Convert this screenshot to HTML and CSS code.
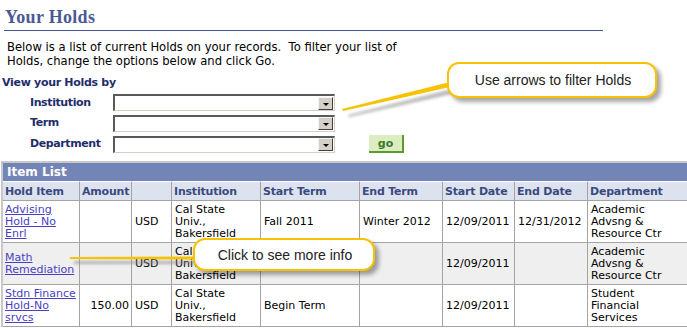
FILE: index.html
```html
<!DOCTYPE html>
<html lang="en">
<head>
    <meta charset="UTF-8">
    <title>Your Holds</title>
    <link rel="stylesheet" href="styles.css">
</head>
<body>
<div class="page">
    <h1 class="page-title">Your Holds</h1>

    <p class="intro">Below is a list of current Holds on your records.&nbsp; To filter your list of<br>
        Holds, change the options below and click Go.</p>

    <h2 class="filter-title">View your Holds by</h2>

    <div class="filters">
        <label class="filter-label">Institution</label>
        <span class="dropdown"><span class="dropdown-btn"></span></span>
        <span></span>

        <label class="filter-label">Term</label>
        <span class="dropdown"><span class="dropdown-btn"></span></span>
        <span></span>

        <label class="filter-label">Department</label>
        <span class="dropdown"><span class="dropdown-btn"></span></span>
        <button class="go-btn" type="button">go</button>
    </div>

    <table class="grid">
        <colgroup>
            <col class="c-item">
            <col class="c-amount">
            <col class="c-cur">
            <col class="c-inst">
            <col class="c-sterm">
            <col class="c-eterm">
            <col class="c-sdate">
            <col class="c-edate">
            <col class="c-dept">
        </colgroup>
        <tr>
            <th class="grid-caption" colspan="9">Item List</th>
        </tr>
        <tr class="grid-head">
            <th>Hold Item</th>
            <th>Amount</th>
            <th></th>
            <th>Institution</th>
            <th>Start Term</th>
            <th>End Term</th>
            <th>Start Date</th>
            <th>End Date</th>
            <th>Department</th>
        </tr>
        <tr>
            <td><a href="#">Advising<br>Hold - No<br>Enrl</a></td>
            <td class="num"></td>
            <td>USD</td>
            <td>Cal State<br>Univ.,<br>Bakersfield</td>
            <td>Fall 2011</td>
            <td>Winter 2012</td>
            <td>12/09/2011</td>
            <td>12/31/2012</td>
            <td>Academic<br>Advsng &amp;<br>Resource Ctr</td>
        </tr>
        <tr class="alt">
            <td><a href="#">Math<br>Remediation</a></td>
            <td class="num"></td>
            <td>USD</td>
            <td>Cal State<br>Univ.,<br>Bakersfield</td>
            <td></td>
            <td></td>
            <td>12/09/2011</td>
            <td></td>
            <td>Academic<br>Advsng &amp;<br>Resource Ctr</td>
        </tr>
        <tr>
            <td><a href="#">Stdn Finance<br>Hold-No<br>srvcs</a></td>
            <td class="num">150.00</td>
            <td>USD</td>
            <td>Cal State<br>Univ.,<br>Bakersfield</td>
            <td>Begin Term</td>
            <td></td>
            <td>12/09/2011</td>
            <td></td>
            <td>Student<br>Financial<br>Services</td>
        </tr>
    </table>

    <!-- callout pointers -->
    <svg class="pointers" width="687" height="328" viewBox="0 0 687 328">
        <defs>
            <filter id="blur" x="-20%" y="-200%" width="140%" height="500%">
                <feGaussianBlur stdDeviation="1.6"/>
            </filter>
        </defs>
        <polygon points="348,115 452,89 452,94 349,117" fill="#8a8a8a" opacity="0.6" filter="url(#blur)"/>
        <polygon points="342,109 450,82 450,87 343,111" fill="#f7c200"/>
        <rect x="74" y="261" width="122" height="3" fill="#8a8a8a" opacity="0.6" filter="url(#blur)"/>
        <polygon points="70,257 196,256.5 196,259.5 70,259" fill="#f7c200"/>
    </svg>

    <div class="callout callout-filter">Use arrows to filter Holds</div>
    <div class="callout callout-info">Click to see more info</div>
</div>
</body>
</html>
```

FILE: styles.css
```css
* {
    margin: 0;
    padding: 0;
    box-sizing: border-box;
}

body {
    font-family: "DejaVu Sans", Verdana, sans-serif;
    font-size: 11px;
    color: #000;
    background: #fff;
    overflow: hidden;
}

.page {
    position: relative;
    width: 687px;
    height: 328px;
    overflow: hidden;
}

.page-title {
    margin: 0 84px 0 4px;
    padding: 7px 0 3px 1px;
    font-family: "Liberation Serif", "Times New Roman", serif;
    font-size: 18px;
    line-height: 20px;
    letter-spacing: 0.3px;
    font-weight: bold;
    color: #4b5a93;
    border-bottom: 1px solid #44569a;
}

.intro {
    margin-top: 9px;
    padding-left: 7px;
    font-size: 11.6px;
    line-height: 14px;
}

.filter-title {
    margin-top: 8px;
    padding-left: 2px;
    font-size: 11px;
    line-height: 14px;
    font-weight: bold;
    letter-spacing: -0.3px;
    color: #1f2d6b;
}

.filters {
    display: grid;
    grid-template-columns: 83px 222px 69px;
    row-gap: 3.5px;
    margin: 4px 0 0 30px;
    align-items: center;
}

.filter-label {
    font-weight: bold;
    color: #1f2d6b;
    letter-spacing: -0.4px;
    line-height: 14px;
}

.dropdown {
    display: flex;
    justify-content: flex-end;
    align-items: center;
    height: 17px;
    background: #fff;
    border-top: 2px solid #5a5a5a;
    border-left: 2px solid #5a5a5a;
    border-right: 1px solid #d4d0c8;
    border-bottom: 1px solid #d4d0c8;
    padding-right: 1px;
}

.dropdown-btn {
    position: relative;
    width: 15px;
    height: 13px;
    background: #d4d0c8;
    border-top: 1px solid #f4f4f4;
    border-left: 1px solid #f4f4f4;
    border-right: 1px solid #404040;
    border-bottom: 1px solid #404040;
}

.dropdown-btn::after {
    content: "";
    position: absolute;
    left: 4px;
    top: 5px;
    border-left: 3px solid transparent;
    border-right: 3px solid transparent;
    border-top: 3px solid #000;
}

.go-btn {
    justify-self: end;
    width: 35px;
    height: 18px;
    font-family: "DejaVu Sans", Verdana, sans-serif;
    font-size: 11px;
    font-weight: bold;
    color: #3b7a2a;
    background: #dcedc1;
    border: none;
    border-right: 2px solid #5c9a2e;
    border-bottom: 2px solid #5c9a2e;
    padding-top: 1px;
}

.grid {
    margin: 8px 0 0 1px;
    border-collapse: separate;
    border-spacing: 0;
    table-layout: fixed;
    width: 720px;
    border-top: 2px solid #c8c8c8;
    border-left: 2px solid #c8c8c8;
}

.c-item { width: 77px; }
.c-amount { width: 52px; }
.c-cur { width: 40px; }
.c-inst { width: 89px; }
.c-sterm { width: 99px; }
.c-eterm { width: 83px; }
.c-sdate { width: 72px; }
.c-edate { width: 73px; }
.c-dept { width: 135px; }

.grid-caption {
    height: 18px;
    padding: 0 0 0 4px;
    text-align: left;
    font-size: 12px;
    font-weight: bold;
    color: #fff;
    background: #7384b7;
}

.grid-head th {
    height: 20px;
    padding: 0 2px;
    text-align: left;
    font-weight: bold;
    letter-spacing: -0.2px;
    color: #3a4a80;
    background: #dde3ee;
    border-right: 1px solid #a4a4a4;
    border-bottom: 1px solid #a4a4a4;
    border-top: 1px solid #fff;
    white-space: nowrap;
    overflow: hidden;
}

.grid td {
    height: 42px;
    padding: 2px 2px 2px 3px;
    line-height: 12px;
    vertical-align: middle;
    border-right: 1px solid #a4a4a4;
    border-bottom: 1px solid #a4a4a4;
}

.grid td:first-child {
    padding-left: 2px;
}

.grid .alt td {
    background: #efefef;
}

.grid td.num {
    text-align: right;
    padding-right: 2px;
}

.grid a {
    color: #4a3fc4;
}

.pointers {
    position: absolute;
    top: 0;
    left: 0;
    pointer-events: none;
}

.callout {
    position: absolute;
    display: flex;
    align-items: center;
    justify-content: center;
    font-family: "Liberation Sans", Arial, sans-serif;
    font-size: 14px;
    color: #222;
    background: #fff;
    border: 2px solid #f7c200;
    border-radius: 12px;
    box-shadow: 4px 4px 4px rgba(0, 0, 0, 0.35);
}

.callout-filter {
    left: 447px;
    top: 62px;
    width: 210px;
    height: 36px;
    padding-left: 2px;
}

.callout-info {
    left: 193px;
    top: 238px;
    width: 182px;
    height: 33px;
    padding-left: 2px;
}
```
